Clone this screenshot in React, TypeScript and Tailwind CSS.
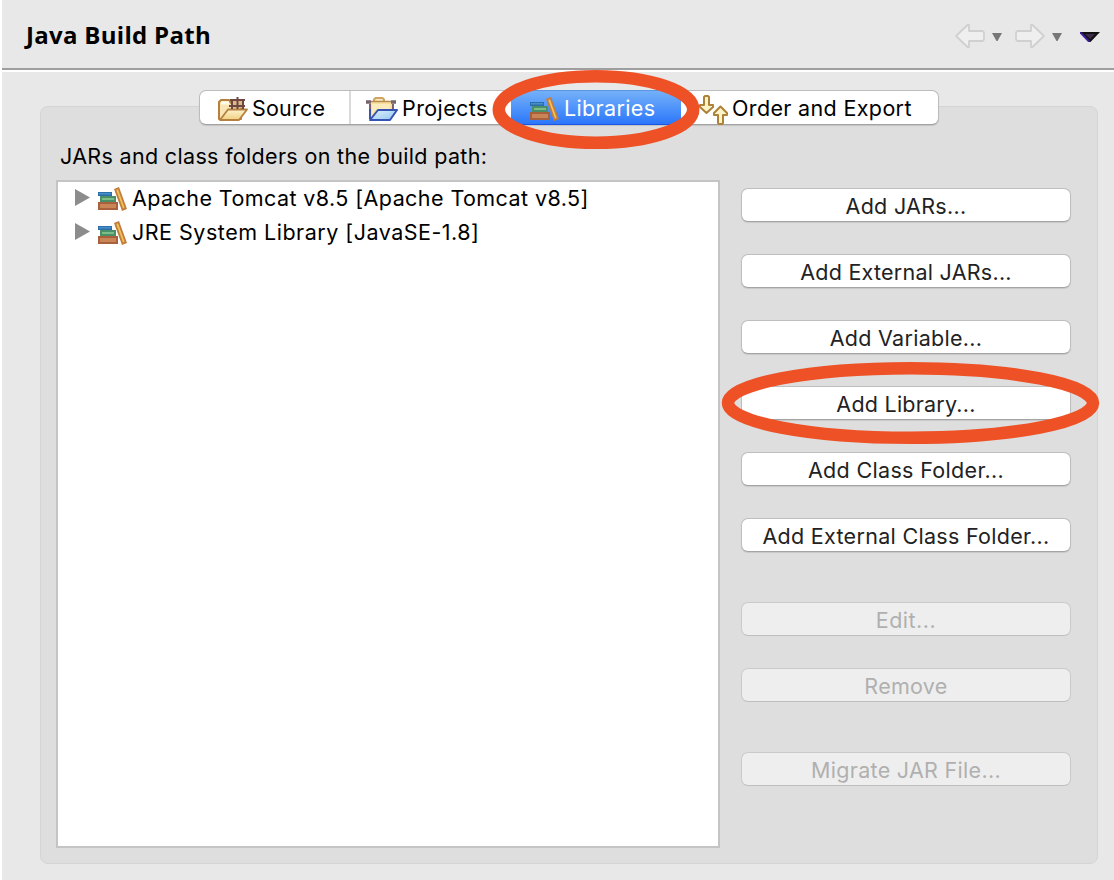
import type { ReactNode } from "react";

function SourceIcon() {
  return (
    <svg width="30" height="24" viewBox="0 0 30 24" className="shrink-0">
      <defs>
        <linearGradient id="srcFront" x1="0" y1="0" x2="0" y2="1">
          <stop offset="0" stopColor="#fdf3cf" />
          <stop offset="1" stopColor="#f0d07f" />
        </linearGradient>
      </defs>
      <path d="M1 22V5l2-2h8l2 3h10v16z" fill="#f9e6b4" stroke="#b5803f" strokeWidth="2" strokeLinejoin="round" />
      <path d="M3 6h8" stroke="#fffbea" strokeWidth="3" />
      <path d="M13 3h12v8H13z" fill="#dcb98b" />
      <path d="M2 23L10 12.500h19L21 23z" fill="url(#srcFront)" stroke="#b5803f" strokeWidth="1.800" strokeLinejoin="round" />
      <path d="M12 3h15M11 9h16M14 2v10M19.500 0v12M25 2v10" stroke="#6d4740" strokeWidth="2" fill="none" />
    </svg>
  );
}

function ProjectsIcon() {
  return (
    <svg width="32" height="24" viewBox="0 0 32 24" className="shrink-0">
      <defs>
        <linearGradient id="prjFront" x1="0" y1="0" x2="1" y2="1">
          <stop offset="0" stopColor="#e2f1fd" />
          <stop offset="1" stopColor="#90c4ef" />
        </linearGradient>
      </defs>
      <path d="M8 5V2.500L9.500 1h7L18 2.500V5" fill="#fbe9bd" stroke="#cfa564" strokeWidth="2" />
      <path d="M4 5h22v12L5 21z" fill="#f8df9f" />
      <path d="M6 7h18v5H10l-4 6z" fill="#fcebbd" />
      <path d="M0 5h5M25 5h5" stroke="#77646f" strokeWidth="3.500" />
      <path d="M5 4.500h20" stroke="#b98c4c" strokeWidth="1.500" />
      <path d="M4 7v6M27 7v6" stroke="#7b6273" strokeWidth="2" />
      <path d="M4 12v10" stroke="#3a54ad" strokeWidth="2" />
      <path d="M4 23L12 13h19L24 23z" fill="url(#prjFront)" stroke="#3553b4" strokeWidth="2" strokeLinejoin="round" />
    </svg>
  );
}

function BooksIcon() {
  return (
    <svg width="30" height="24" viewBox="0 0 30 24" className="shrink-0">
      <rect x="0" y="5" width="14" height="4" fill="#2d6ea9" />
      <rect x="1" y="6" width="12" height="1.500" fill="#4590cb" />
      <rect x="2" y="9" width="16" height="6" fill="#4a8f68" />
      <rect x="4" y="11" width="12" height="2" fill="#7dbd86" />
      <rect x="0" y="15" width="20" height="8" fill="#a9603d" />
      <rect x="2" y="17" width="16" height="4" fill="#c98556" />
      <path d="M16 2L21 0L29 22L24 24z" fill="#c27c3c" />
      <path d="M18.300 3L20 2.300L26.600 20.800L25 21.500z" fill="#efc35a" />
    </svg>
  );
}

function OrderIcon() {
  return (
    <svg width="32" height="30" viewBox="0 0 32 30" className="shrink-0">
      <g fill="#fdf3c8" stroke="#ad8137" strokeWidth="2" strokeLinejoin="round">
        <path d="M6 2L7 1h3l1 1v8h4v2L8.500 18L2 12V10h4z" />
        <path d="M20 28l1 1h3l1-1V20h4V18L22.500 11.500L16 18v2h4z" />
      </g>
    </svg>
  );
}

function HistoryArrow({ forward = false }: { forward?: boolean }) {
  return (
    <svg width="30" height="24" viewBox="0 0 30 24" className={forward ? "shrink-0 -scale-x-100" : "shrink-0"}>
      <path
        d="M1 12L12.500 1H14v6h13.500L29 8.500v7L27.500 17H14v6h-1.500z"
        fill="#efefef"
        stroke="#d0d0d0"
        strokeWidth="1.800"
        strokeLinejoin="round"
      />
    </svg>
  );
}

function SmallTriangle() {
  return (
    <svg width="10" height="8" viewBox="0 0 10 8" className="shrink-0">
      <path d="M0 0h10L5.500 8h-1z" fill="#777" />
    </svg>
  );
}

function Tab({ icon, label, className }: { icon: ReactNode; label: string; className: string }) {
  return (
    <div className={"flex h-full shrink-0 items-center " + className}>
      {icon}
      <span className="pb-[2px]">{label}</span>
    </div>
  );
}

function TreeRow({ label, className }: { label: string; className: string }) {
  return (
    <div className="flex h-[34px] items-center pl-[17px]">
      <svg width="15" height="17" viewBox="0 0 15 17" className="mr-[8px] mb-[4px] shrink-0">
        <path d="M0 0L15 8.500L0 17z" fill="#8c8c8c" />
      </svg>
      <BooksIcon />
      <span className={"ml-[4px] pb-[2px] " + className}>{label}</span>
    </div>
  );
}

const buttons = [
  { label: "Add JARs...", box: "", text: "tracking-[0.3px]" },
  { label: "Add External JARs...", box: "mt-8", text: "tracking-[0.25px]" },
  { label: "Add Variable...", box: "mt-8", text: "tracking-[0.3px]" },
  { label: "Add Library...", box: "mt-8", text: "tracking-[0.23px]" },
  { label: "Add Class Folder...", box: "mt-8", text: "tracking-[0.33px]" },
  { label: "Add External Class Folder...", box: "mt-8", text: "tracking-[0.3px]" },
  { label: "Edit...", box: "mt-[50px]", text: "tracking-[0.5px]", disabled: true },
  { label: "Remove", box: "mt-8", text: "tracking-[0.3px]", disabled: true },
  { label: "Migrate JAR File...", box: "mt-[50px]", text: "tracking-[0.3px]", disabled: true },
];

export default function App() {
  return (
    <div className="relative flex h-[880px] w-[1114px] flex-col overflow-hidden border-l-2 border-white bg-[#e8e8e8] font-['Inter',sans-serif] text-[21.5px] leading-[26px] whitespace-nowrap text-black">
      <header className="flex h-[72px] shrink-0 items-start justify-between border-b-2 border-white">
        <div className="flex h-[70px] w-full items-center justify-between border-b-2 border-[#9e9e9e] pr-[14px] pl-[24px]">
          <h1 className="pt-[1px] font-['Open_Sans',sans-serif] text-[24px] font-bold tracking-[0.3px]">Java Build Path</h1>
          <div className="flex items-center pt-[4px]">
            <HistoryArrow />
            <div className="ml-[7px] pt-[1px]"><SmallTriangle /></div>
            <div className="ml-[13px]"><HistoryArrow forward /></div>
            <div className="ml-[7px] pt-[1px]"><SmallTriangle /></div>
            <svg width="20" height="10" viewBox="0 0 20 10" className="mt-[1px] ml-[18px]">
              <path d="M0 0h20L10.500 10h-1z" fill="#111" />
              <path d="M0 0L9.500 10" stroke="#3f1c9c" strokeWidth="2" />
              <path d="M5 2h10L10 7z" fill="#3d2d49" />
            </svg>
          </div>
        </div>
      </header>

      <div className="mt-[34px] ml-[38px] flex h-[758px] w-[1058px] flex-col rounded-[8px] border border-[#d4d4d4] bg-[#dedede]">
        <nav className="-mt-[17px] ml-[158px] flex h-[35px] w-[740px] rounded-[7px] border border-[#bcbcbc] border-b-[#a2a2a2] bg-white shadow-[0_1px_1px_rgba(0,0,0,0.12)]">
          <Tab icon={<SourceIcon />} label="Source" className="w-[151px] gap-[4px] border-r-2 border-[#dadada] pl-[18px] pt-[3px] tracking-[0.2px]" />
          <Tab icon={<ProjectsIcon />} label="Projects" className="w-[160px] gap-[4px] pl-[15px] pt-[3px] tracking-[0.4px]" />
          <div className="-my-px flex h-[35px]">
            <Tab icon={<BooksIcon />} label="Libraries" className="w-[170px] gap-[4px] border-y border-t-[#5b96e2] border-b-[#1c55e0] bg-linear-to-b from-[#74b0f8] to-[#2b76fb] pl-[19px] pt-[3px] text-white tracking-[0.35px]" />
          </div>
          <Tab icon={<div className="pt-[2px]"><OrderIcon /></div>} label="Order and Export" className="w-[257px] gap-[2px] pl-[17px] pt-[3px] tracking-[0.35px]" />
        </nav>

        <div className="mt-[18px] ml-[19px] tracking-[0.33px]">JARs and class folders on the build path:</div>

        <div className="mt-[11px] flex pl-[15px]">
          <div className="h-[668px] w-[664px] shrink-0 border-2 border-[#c4c4c4] bg-white">
            <TreeRow label="Apache Tomcat v8.5 [Apache Tomcat v8.5]" className="tracking-[0.42px]" />
            <TreeRow label="JRE System Library [JavaSE-1.8]" className="tracking-[0.5px]" />
          </div>
          <div className="ml-[21px] flex w-[330px] flex-col pt-[8px]">
            {buttons.map((b) => (
              <button
                key={b.label}
                disabled={b.disabled}
                className={
                  "h-[34px] shrink-0 rounded-[7px] border pt-[2px] " +
                  (b.disabled
                    ? "border-[#cacaca] border-b-[#bebebe] bg-[#eeeeee] text-[#b0b0b0] "
                    : "border-[#bebebe] border-b-[#a4a4a4] bg-white text-[#222222] shadow-[0_1px_1px_rgba(0,0,0,0.1)] ") +
                  b.box + " " + b.text
                }
              >
                {b.label}
              </button>
            ))}
          </div>
        </div>
      </div>

      <svg width="1114" height="880" viewBox="0 0 1114 880" className="pointer-events-none absolute top-0 -left-[2px]">
        <g fill="none" stroke="#ee5126" strokeWidth="12.500">
          <ellipse cx="596" cy="109.500" rx="97.200" ry="33.200" />
          <ellipse cx="910.500" cy="403" rx="182.500" ry="34.700" />
        </g>
      </svg>
    </div>
  );
}
